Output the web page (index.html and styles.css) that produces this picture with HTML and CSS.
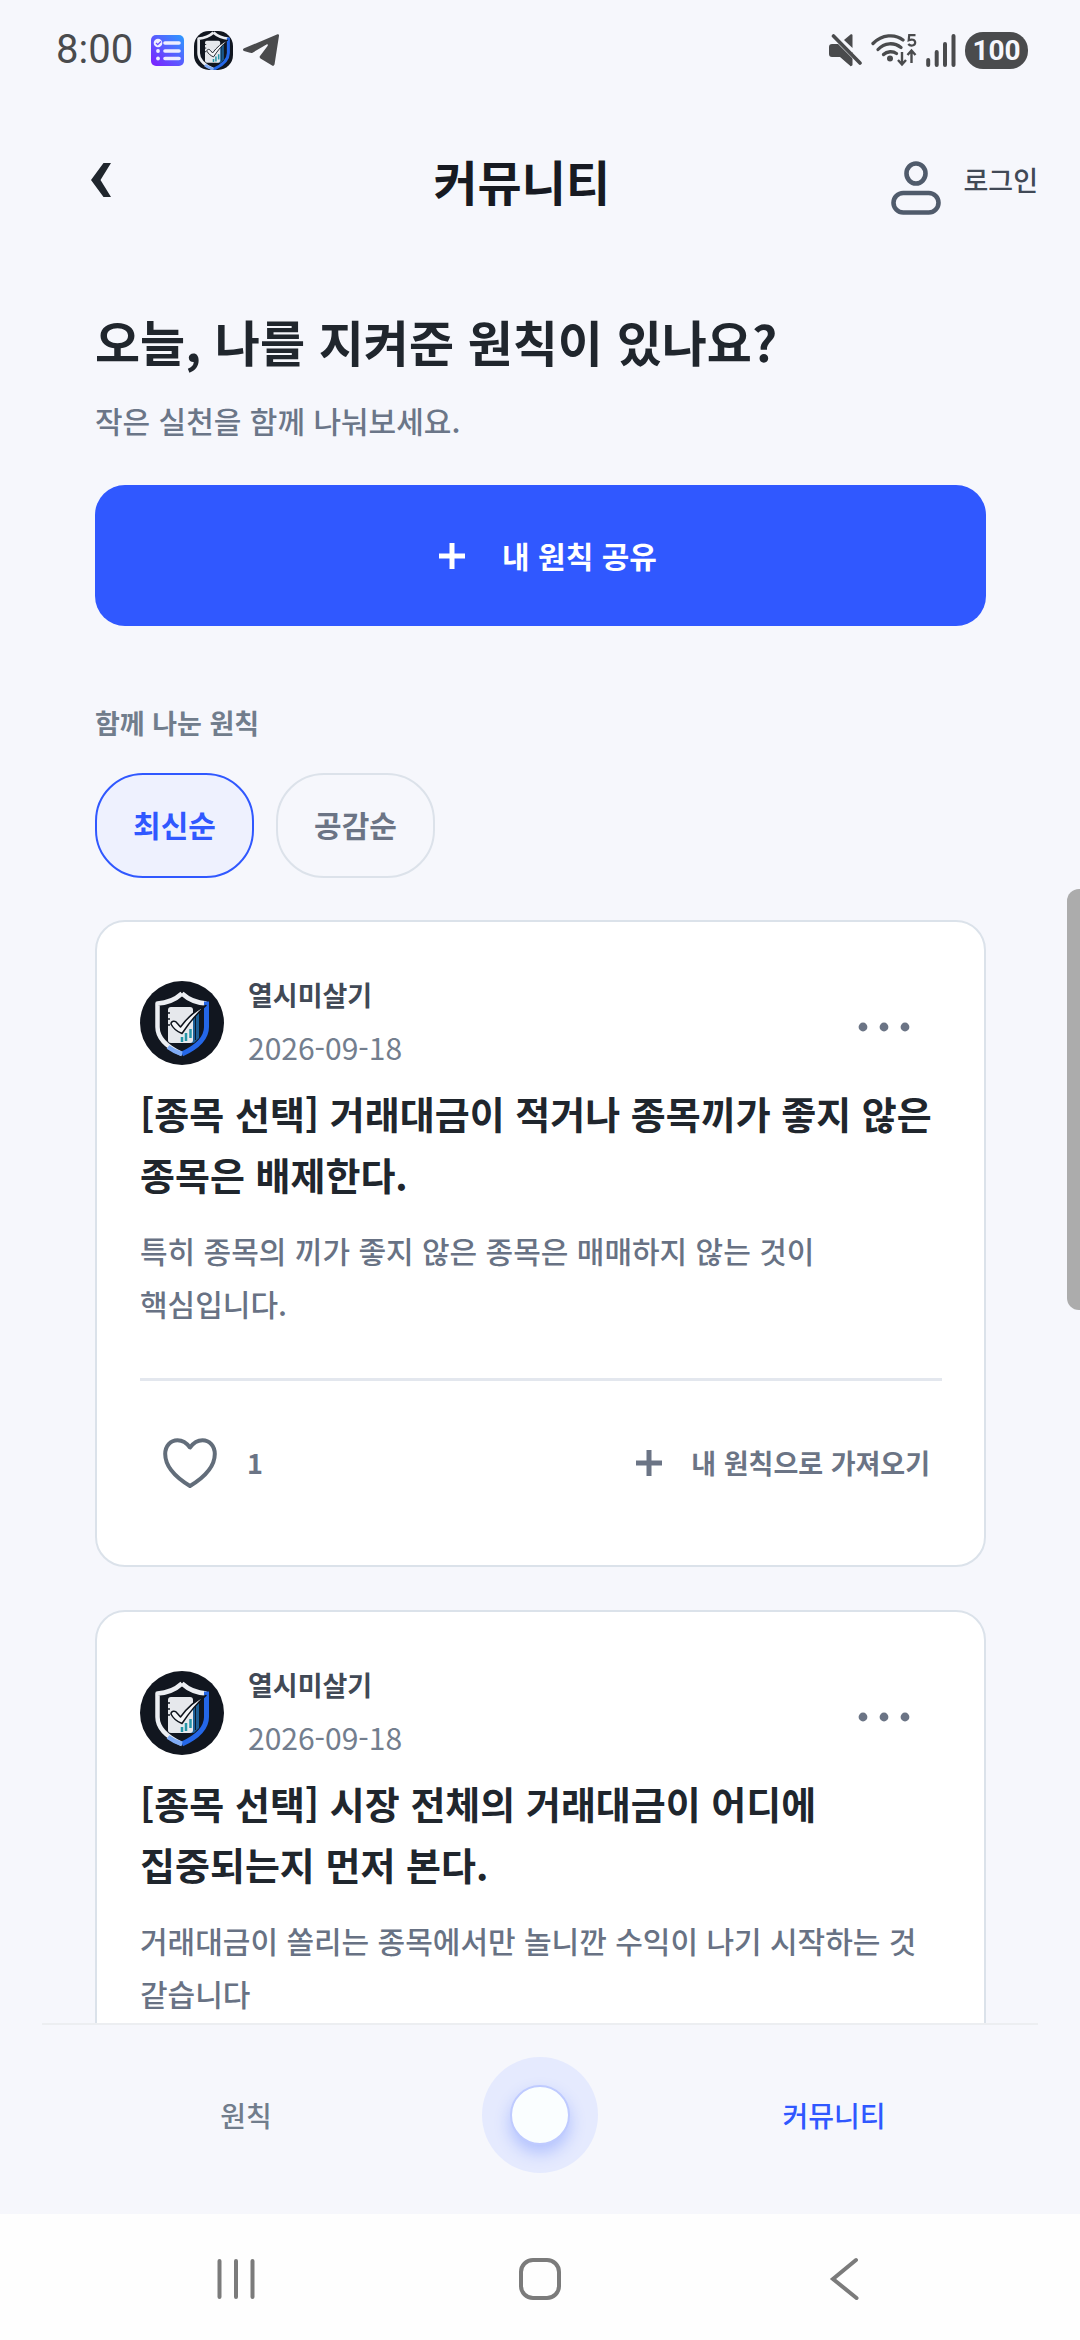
FILE: index.html
```html
<!DOCTYPE html>
<html lang="ko">
<head>
<meta charset="utf-8">
<meta name="viewport" content="width=device-width, initial-scale=1">
<title>커뮤니티</title>
<link rel="stylesheet" href="styles.css">
</head>
<body>
<svg class="defs" aria-hidden="true">
  <defs>
    <linearGradient id="list-bg" x1="0" y1="1" x2="1" y2="0">
      <stop offset="0" stop-color="#7d1dff"/><stop offset=".5" stop-color="#5a5cff"/><stop offset="1" stop-color="#2b9cff"/>
    </linearGradient>
    <symbol id="shield" viewBox="0 0 84 84">
      <path d="M42 12.500C36 18 27 22 17.500 22.500V46C17.500 58 29 67 42 73" fill="none" stroke="#eceef2" stroke-width="4.500" stroke-linejoin="round"/>
      <path d="M42 12.500C48 18 57 22 66.500 22.500" fill="none" stroke="#eceef2" stroke-width="4.500"/>
      <path d="M66.500 20.500V46C66.500 58 55 67 42 73" fill="none" stroke="#2467e8" stroke-width="5"/>
      <path d="M28 66C32 69 37 71.500 42 73" fill="none" stroke="#7fabf5" stroke-width="4.500"/>
      <path d="M53 32h6v25l-5 5h-8z" fill="#1c5f96"/>
      <path d="M55.500 31v28" stroke="#0c1a2c" stroke-width="1"/>
      <rect x="28" y="26" width="25" height="36" rx="3" fill="#e6e8ec"/>
      <path d="M26 32h4M26 38h4M26 44h4" stroke="#11161f" stroke-width="1.500"/>
      <path d="M42 56v5M46 52v8M50.500 48v9" stroke="#2596a8" stroke-width="2.500"/>
      <path d="M31 43c0-3 4-4 6-1l3.500 4C47 37 56 29 66 24.500C57 32 49 42 42 52.500c-4-1.500-9-5.500-11-9.500z" fill="#f5f6f8" stroke="#0e131b" stroke-width="1.500" stroke-linejoin="round"/>
    </symbol>
    <symbol id="plus" viewBox="0 0 28 28">
      <path d="M14 1v26M1 14h26" stroke="currentColor" stroke-width="5"/>
    </symbol>
    <symbol id="dots" viewBox="0 0 52 10">
      <circle cx="5" cy="5" r="4.400"/><circle cx="26" cy="5" r="4.400"/><circle cx="47" cy="5" r="4.400"/>
    </symbol>
    <symbol id="heart" viewBox="0 0 54 50">
      <path d="M27 9.500C23 4 18.500 2.200 14.500 2.200C7.500 2.200 2.200 8 2.200 16C2.200 29 13 39.500 27 48C41 39.500 51.800 29 51.800 16C51.800 8 46.500 2.200 39.500 2.200C35.500 2.200 31 4 27 9.500z" fill="none" stroke="currentColor" stroke-width="4" stroke-linejoin="round"/>
    </symbol>
  </defs>
</svg>

<div class="status">
  <div class="status-group">
    <span class="clock">8:00</span>
    <svg class="st-list" viewBox="0 0 33 31"><rect width="33" height="31" rx="5" fill="url(#list-bg)"/><circle cx="7" cy="8" r="4.300" fill="#f0efff"/><path d="M5 8l1.700 1.700L10 6.500" fill="none" stroke="#6a50ff" stroke-width="1.300"/><path d="M14 8h14M14 16h14M14 23.500h14" stroke="#efeeff" stroke-width="3.600" stroke-linecap="round"/><circle cx="7" cy="16" r="1.900" fill="#efeeff"/><circle cx="7" cy="23.500" r="1.900" fill="#efeeff"/></svg>
    <svg class="st-shield" viewBox="0 0 39 39"><rect width="39" height="39" rx="15" fill="#11161f"/><use href="#shield" x="-6" y="-6" width="51" height="51"/></svg>
    <svg class="st-plane" viewBox="0 0 36 32"><path d="M34.500.3C35.600-.1 36.100.7 36 1.700L31.600 30c-.3 1.900-1.600 2.300-2.900 1.300L17.500 24.500c-1-.7-1.200-1.800-.3-2.700L24.500 12c.8-1.400.2-2.200-1-1.400L10 18.400c-1 .6-2 .7-3 .4L1 17c-1.400-.4-1.400-2 .2-2.700z" fill="#4a4b4d"/></svg>
  </div>
  <div class="status-group status-right">
    <svg class="st-mute" viewBox="0 0 33 33"><path d="M3 10h8L22 20v12.500L11 23H3c-2 0-3-1-3-3v-7c0-2 1-3 3-3z" fill="#4a4b4d"/><path d="M15 6l6.500-5.500c1-.7 2 0 2 1V14z" fill="#4a4b4d"/><path d="M11 22l10.500 9.500c1 .8 2 .3 2-1V18z" fill="#4a4b4d"/><path d="M2 0L33 31" stroke="#f6f7fc" stroke-width="4"/><path d="M4.500 2L31 29" stroke="#4a4b4d" stroke-width="3.600" stroke-linecap="round"/></svg>
    <svg class="st-wifi" viewBox="0 0 46 34"><g fill="none" stroke="#4a4b4d" stroke-width="3.300" stroke-linecap="round"><path d="M2 10.500C11 1.500 24 .5 32 7"/><path d="M7 16.500C13.500 9.500 23 9 30 14.500"/><path d="M12.500 21.500C16 18 22 18 25.500 20.500"/></g><circle cx="19" cy="25.500" r="3" fill="#4a4b4d"/><path d="M31 19v12M26.500 27l4.500 4.500 4.500-4.500M40 30V18M35.500 22l4.500-4.500 4.500 4.500" fill="none" stroke="#f6f7fc" stroke-width="5"/><path d="M31 19v12M27 27l4 4.500 4-4.500M40.500 30V18M36.500 22l4-4.500 4 4.500" fill="none" stroke="#4a4b4d" stroke-width="2.400"/><path d="M44.500 2.200h-6.300l-.5 5c2.800-1.300 6.500-.6 6.500 2.400 0 3.300-5 3.900-6.900 1.400" fill="none" stroke="#4a4b4d" stroke-width="2.200"/></svg>
    <svg class="st-signal" viewBox="0 0 30 33"><path d="M2.200 26v5M10.700 18v13M19 10v21M27.500 2v29" stroke="#4a4b4d" stroke-width="4" stroke-linecap="round"/></svg>
    <span class="battery">100</span>
  </div>
</div>

<header class="topbar">
  <button class="back" type="button" aria-label="뒤로"><svg viewBox="0 0 20 34"><path d="M12.500 0H20L9.500 17 20 34h-7.500L0 17z" fill="currentColor"/></svg></button>
  <h1 class="title">커뮤니티</h1>
  <a class="login" href="#">
    <svg viewBox="0 0 50 54" fill="none" stroke="currentColor" stroke-width="4.600"><ellipse cx="25" cy="12.500" rx="9.500" ry="10"/><rect x="2.500" y="32" width="45" height="19.500" rx="9.750"/></svg>
    <span>로그인</span>
  </a>
</header>

<main class="content">
  <h2 class="question">오늘, 나를 지켜준 원칙이 있나요?</h2>
  <p class="hint">작은 실천을 함께 나눠보세요.</p>
  <button class="share" type="button"><svg class="plus"><use href="#plus"/></svg><span>내 원칙 공유</span></button>

  <h3 class="section">함께 나눈 원칙</h3>
  <div class="tabs">
    <button class="tab tab-on" type="button" aria-pressed="true">최신순</button>
    <button class="tab" type="button" aria-pressed="false">공감순</button>
  </div>

  <article class="card">
    <div class="author">
      <svg class="avatar"><use href="#shield"/></svg>
      <div class="meta"><strong class="name">열시미살기</strong><time class="date" datetime="2026-09-18">2026-09-18</time></div>
      <button class="more" type="button" aria-label="더보기"><svg><use href="#dots"/></svg></button>
    </div>
    <h4 class="rule">[종목 선택] 거래대금이 적거나 종목끼가 좋지 않은 종목은 배제한다.</h4>
    <p class="note">특히 종목의 끼가 좋지 않은 종목은 매매하지 않는 것이 핵심입니다.</p>
    <div class="actions">
      <button class="action like" type="button" aria-label="공감"><svg class="heart"><use href="#heart"/></svg><span>1</span></button>
      <button class="action fetch" type="button"><svg class="plus"><use href="#plus"/></svg><span>내 원칙으로 가져오기</span></button>
    </div>
  </article>

  <article class="card">
    <div class="author">
      <svg class="avatar"><use href="#shield"/></svg>
      <div class="meta"><strong class="name">열시미살기</strong><time class="date" datetime="2026-09-18">2026-09-18</time></div>
      <button class="more" type="button" aria-label="더보기"><svg><use href="#dots"/></svg></button>
    </div>
    <h4 class="rule">[종목 선택] 시장 전체의 거래대금이 어디에 집중되는지 먼저 본다.</h4>
    <p class="note">거래대금이 쏠리는 종목에서만 놀니깐 수익이 나기 시작하는 것 같습니다</p>
  </article>
</main>
<div class="scroll-thumb"></div>

<nav class="tabbar">
  <a href="#">원칙</a>
  <button class="orb" type="button" aria-label="홈"><span class="orb-core"></span></button>
  <a class="current" href="#" aria-current="page">커뮤니티</a>
</nav>

<div class="system">
  <button type="button" aria-label="최근 앱"><svg viewBox="0 0 44 44"><path d="M5.500 4v36M22 4v36M38.500 4v36"/></svg></button>
  <button type="button" aria-label="홈 화면"><svg viewBox="0 0 44 44"><rect x="3" y="3" width="38" height="38" rx="12"/></svg></button>
  <button type="button" aria-label="이전"><svg viewBox="0 0 44 44"><path d="M34 3L11 22l23.500 19"/></svg></button>
</div>
</body>
</html>
```
FILE: styles.css
```css
* { box-sizing: border-box; }

body {
  margin: 0;
  height: 100vh;
  display: flex;
  flex-direction: column;
  position: relative;
  overflow: hidden;
  background: #f6f7fc;
  color: #20262d;
  font-family: "Noto Sans CJK KR", sans-serif;
  word-break: keep-all;
}

h1, h2, h3, h4, p { margin: 0; }
svg { display: block; flex: none; }
button {
  margin: 0;
  padding: 0;
  border: 0;
  background: none;
  color: inherit;
  font: inherit;
}
a { color: inherit; text-decoration: none; }
.defs { position: absolute; width: 0; height: 0; }

/* Status bar */
.status {
  flex: none;
  height: 100px;
  padding: 0 52px 0 56px;
  display: flex;
  justify-content: space-between;
  align-items: center;
  font-family: Roboto, sans-serif;
  color: #4a4b4d;
}
.status-group { display: flex; align-items: center; gap: 10px; }
.status-right { gap: 9px; }
.clock { font-size: 40px; line-height: 40px; margin-right: 8px; }
.st-list { width: 33px; height: 31px; }
.st-shield { width: 39px; height: 39px; }
.st-plane { width: 36px; height: 32px; }
.st-mute { width: 33px; height: 33px; }
.st-wifi { width: 46px; height: 34px; }
.st-signal { width: 30px; height: 33px; }
.battery {
  width: 63px;
  height: 37px;
  border-radius: 18px;
  background: #4a4b4d;
  color: #f6f7fc;
  font-size: 28px;
  font-weight: 700;
  line-height: 37px;
  text-align: center;
}

/* Page header */
.topbar {
  flex: none;
  height: 160px;
  padding: 0 42px;
  display: flex;
  justify-content: space-between;
  align-items: center;
}
.back {
  width: 118px;
  height: 118px;
  display: grid;
  place-items: center;
}
.back svg { width: 20px; height: 34px; }
.title { font-size: 48px; line-height: 60px; font-weight: 700; color: #171a22; }
.login {
  display: flex;
  align-items: center;
  gap: 22px;
  padding-left: 8px;
  font-size: 27px;
  line-height: 40px;
  font-weight: 500;
  color: #414956;
}
.login svg { width: 50px; height: 54px; margin-top: 16px; color: #505b6b; }

/* Content */
.content {
  flex: 1;
  min-height: 0;
  overflow: hidden;
  padding: 50px 94px 0 95px;
}
.question { font-size: 49px; line-height: 62px; font-weight: 700; }
.hint { margin-top: 25px; font-size: 30px; line-height: 46px; font-weight: 500; color: #6b7688; }
.share {
  width: 100%;
  height: 141px;
  margin-top: 42px;
  padding-bottom: 2px;
  border-radius: 30px;
  background: #3058ff;
  color: #fff;
  display: flex;
  justify-content: center;
  align-items: center;
  font-size: 30px;
  line-height: 46px;
  font-weight: 700;
}
.plus { width: 28px; height: 28px; }
.share .plus { margin: 2px 36px 0 14px; }
.section {
  margin-top: 77px;
  font-size: 27px;
  line-height: 40px;
  font-weight: 700;
  color: #717d8c;
}
.tabs { display: flex; gap: 22px; margin-top: 30px; }
.tab {
  width: 159px;
  height: 105px;
  padding-bottom: 3px;
  border: 2px solid #dce2ea;
  border-radius: 48px;
  font-size: 30px;
  font-weight: 700;
  color: #6b7485;
}
.tab-on { border-color: #3058ff; background: #eef1fe; color: #3058ff; }

/* Cards */
.card {
  margin-top: 42px;
  padding: 46px 42px 60px 43px;
  border: 2px solid #dbe2ea;
  border-radius: 30px;
  background: #fff;
}
.card + .card { margin-top: 43px; }
.author { height: 110px; display: flex; align-items: center; }
.avatar { width: 84px; height: 84px; border-radius: 50%; background: #11161f; }
.meta {
  flex: 1;
  height: 110px;
  margin-left: 24px;
  display: flex;
  flex-direction: column;
}
.name { font-size: 27px; line-height: 53px; font-weight: 700; color: #414956; }
.date { font-size: 30px; line-height: 53px; color: #737e8e; }
.more {
  width: 116px;
  height: 88px;
  display: grid;
  place-items: center;
  padding-top: 8px;
}
.more svg { width: 52px; height: 10px; fill: #6b7485; }
.rule { margin-top: 4px; font-size: 38px; line-height: 61px; font-weight: 700; }
.note { margin-top: 20px; font-size: 30px; line-height: 53px; font-weight: 500; color: #687284; }
.actions {
  margin-top: 48px;
  padding: 40px 12px 0 23px;
  border-top: 3px solid #e3e7ee;
  display: flex;
  justify-content: space-between;
}
.action {
  height: 84px;
  display: flex;
  align-items: center;
  font-size: 27px;
  line-height: 40px;
  font-weight: 700;
  color: #6b7485;
}
.heart { width: 54px; height: 50px; margin-right: 30px; color: #626d7a; }
.fetch .plus { margin-right: 28px; }

.scroll-thumb {
  position: absolute;
  right: 0;
  top: 38%;
  width: 13px;
  height: 18%;
  border-radius: 12px 0 0 12px;
  background: #acacac;
}

/* Bottom navigation */
.tabbar {
  flex: none;
  height: 191px;
  margin: 0 42px;
  padding-bottom: 10px;
  border-top: 2px solid #eceef1;
  display: grid;
  grid-template-columns: 1fr 180px 1fr;
  place-items: center;
  font-size: 28px;
  line-height: 40px;
  font-weight: 500;
  color: #717d8c;
}
.tabbar .current { color: #3058ff; }
.orb {
  width: 116px;
  height: 116px;
  border-radius: 50%;
  background: #e5eafe;
  display: grid;
  place-items: center;
}
.orb-core {
  width: 60px;
  height: 60px;
  border: 2px solid #bfcbff;
  border-radius: 50%;
  background: #fafeff;
  box-shadow: 0 8px 16px rgba(48, 88, 255, .28);
}

/* Device navigation */
.system {
  flex: none;
  height: 126px;
  padding: 3px 84px 0;
  background: #fefefe;
  display: grid;
  grid-template-columns: repeat(3, 1fr);
  place-items: center;
}
.system svg {
  width: 44px;
  height: 44px;
  fill: none;
  stroke: #7b7b7b;
  stroke-width: 4;
  stroke-linecap: round;
}
```
